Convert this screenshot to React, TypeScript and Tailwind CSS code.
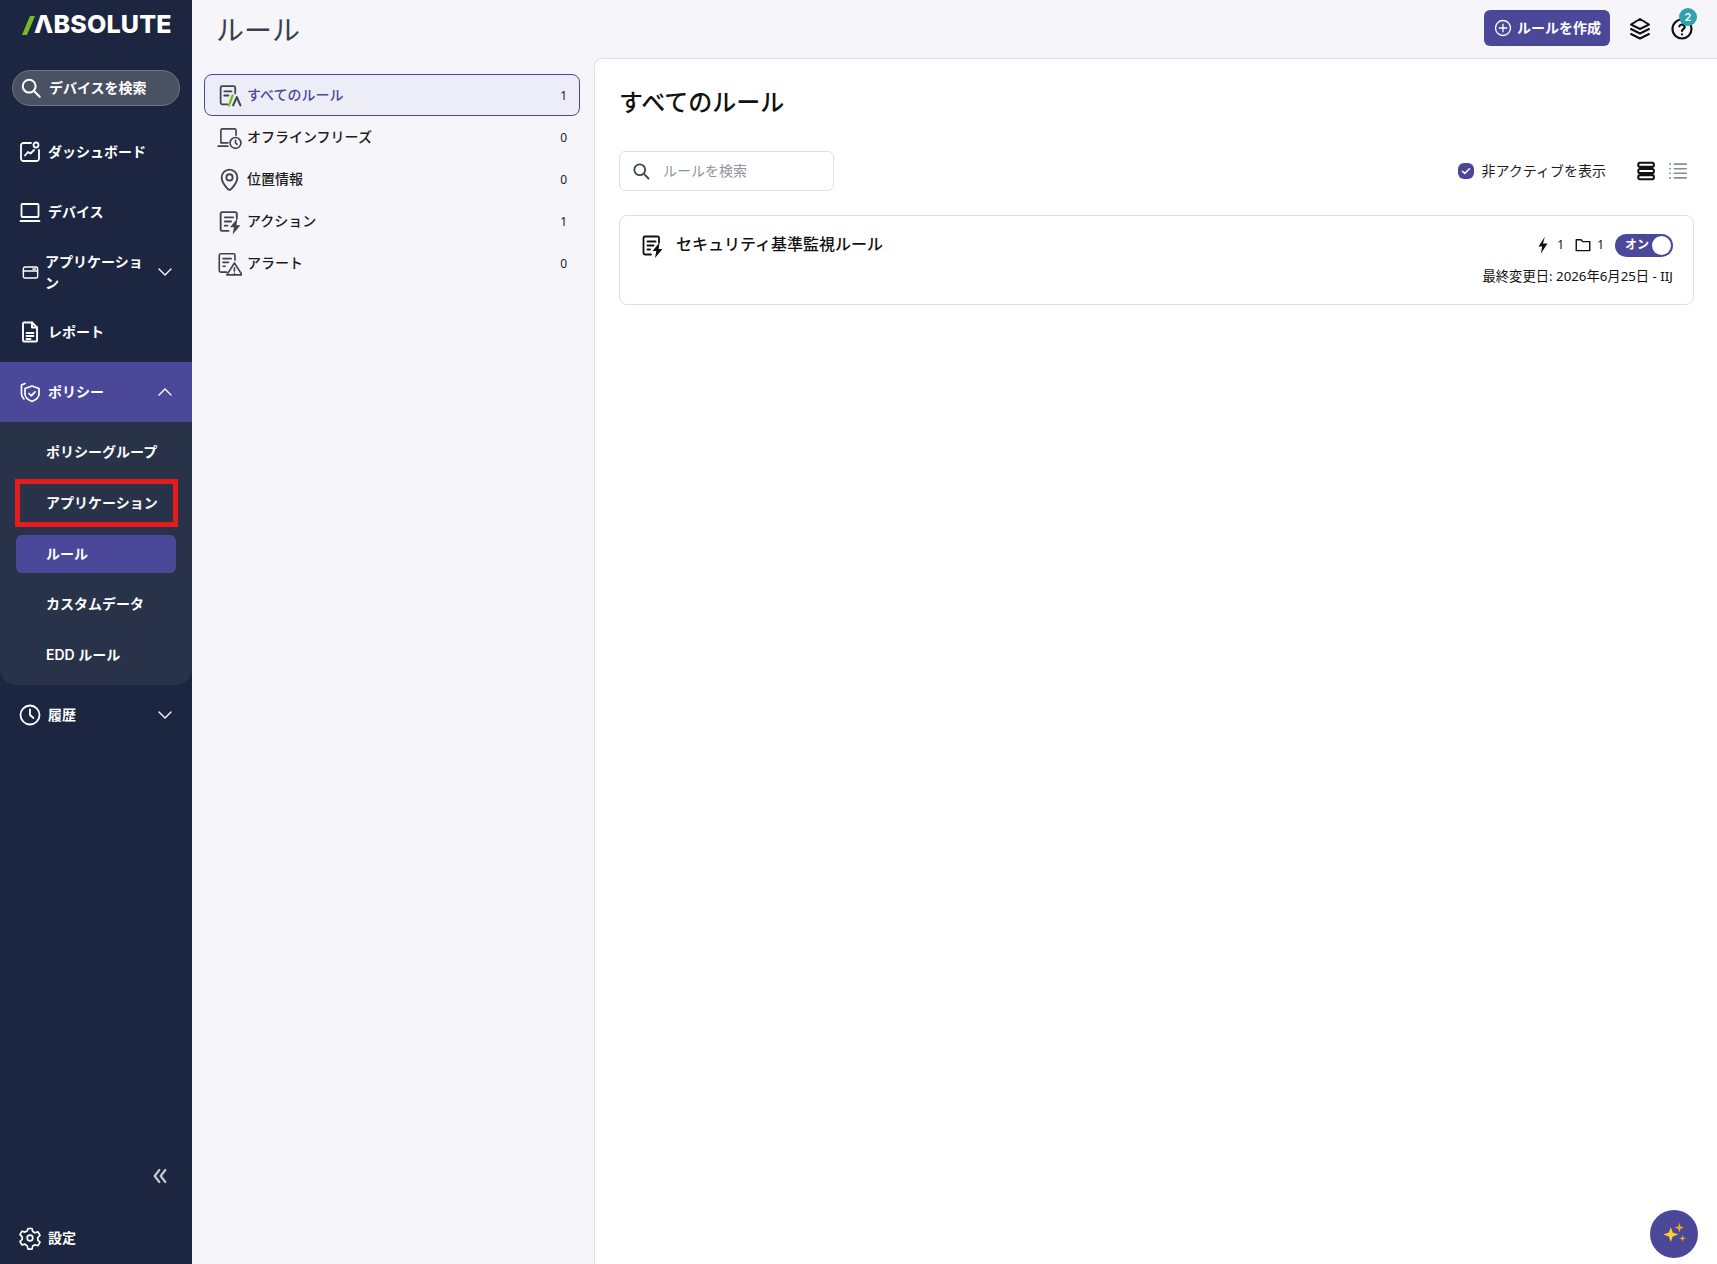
import React from "react";

const S = ({ size = 24, className = "", children, vb = "0 0 24 24", fill = "none", sw = 2 }: any) => (
  <svg width={size} height={size} viewBox={vb} fill={fill} stroke={fill === "none" ? "currentColor" : "none"} strokeWidth={sw} strokeLinecap="round" strokeLinejoin="round" className={className}>
    {children}
  </svg>
);

const Chevron = ({ up = false }: { up?: boolean }) => (
  <S size={18} sw={1.8}><path d={up ? "M4 16l8-8 8 8" : "M4 8l8 8 8-8"} /></S>
);

const NavItem = ({ icon, label, chevron, active, wrap }: any) => (
  <div className={`h-[60px] pl-[18px] pr-[18px] flex items-center text-white text-sm font-semibold ${active ? "bg-[#4c4899]" : ""}`}>
    <span className="w-6 h-6 shrink-0 flex items-center justify-center">{icon}</span>
    <span className={wrap ? "ml-[3px] -mt-px w-[100px] leading-[21px] [word-break:break-all]" : "ml-[6px]"}>{label}</span>
    {chevron && <span className="ml-auto">{<Chevron up={chevron === "up"} />}</span>}
  </div>
);

const SubItem = ({ label, active, marked }: any) => (
  <div className={`relative h-[38px] mt-[12.75px] first:mt-0 ml-4 w-[160px] pl-[30px] flex items-center rounded-md text-white text-sm font-semibold ${active ? "bg-[#4c4899]" : ""}`}>
    {label}
    {marked && <span className="absolute -top-[5px] -bottom-[5px] -left-px -right-[2px] border-[5px] border-[#e61c1c]" />}
  </div>
);

const DocBase = ({ children }: any) => (
  <>
    <path d="M11 21H5A1.500 1.500 0 0 1 3.500 19.500v-15A1.500 1.500 0 0 1 5 3h12.500A1.500 1.500 0 0 1 19 4.500V9" />
    <path d="M7.500 8h8M7.500 12h6M7.500 16h2.500" />
    {children}
  </>
);

const Bolt = () => <path d="M19.500 9l-7 8.500h3.800L15 24.500l7.500-9h-3.800l.8-6.500z" fill="currentColor" stroke="none" />;

const ListRow = ({ icon, label, count, active }: any) => (
  <div className={`h-[42px] pl-[11px] pr-[12px] flex items-center rounded-lg text-sm border ${active ? "bg-[#ecedf6] border-[#4c4899] text-[#4c4899]" : "border-transparent text-[#1c1c1c]"}`}>
    <span className="w-[26px] h-6 shrink-0 flex items-center justify-center text-[#3f4450]">{icon}</span>
    <span className="ml-[5px] font-medium">{label}</span>
    <span className="ml-auto pt-px text-xs text-[#1c1c1c] font-['Noto_Sans',sans-serif]">{count}</span>
  </div>
);

export default function App() {
  return (
    <div className="h-screen w-full overflow-hidden flex bg-[#f5f5fa] font-['Inter','Noto_Sans_CJK_JP',sans-serif]">
      <aside className="w-[192px] shrink-0 bg-[#1c2640] flex flex-col">
        <div className="h-[70px] pl-[22px] pt-[8px] flex items-start">
          <svg width="13" height="19" viewBox="0 0 13 19" className="mt-[8px] shrink-0"><path d="M8 0h5L5 19H0z" fill="#76bc21" /></svg>
          <span className="text-white text-[25px] leading-[32px] font-extrabold tracking-[0.2px] ml-[-1px]">ΛBSOLUTE</span>
        </div>
        <div className="h-9 mx-3 w-[168px] rounded-full bg-[#4a5163] border border-[#6d7485] flex items-center pl-[7px] text-white text-sm font-semibold">
          <S size={22} sw={2.200}><circle cx="10" cy="10" r="7" /><path d="M15.500 15.500L21.500 21.500" /></S>
          <span className="ml-[7px]">デバイスを検索</span>
        </div>
        <nav className="mt-4">
          <NavItem label="ダッシュボード" icon={<S sw={1.8}><path d="M13 3H5.500A2.500 2.500 0 0 0 3 5.500v13A2.500 2.500 0 0 0 5.500 21h13a2.500 2.500 0 0 0 2.500-2.500V10" /><circle cx="18" cy="5" r="2.500" /><path d="M7 15.500l3-3.500 2.500 1.500L16 10" /></S>} />
          <NavItem label="デバイス" icon={<S sw={1.8}><rect x="3.500" y="4" width="17" height="13" rx="1" /><path d="M2.500 21h19" /></S>} />
          <NavItem wrap chevron="down" label="アプリケーション" icon={<S size={19} sw={1.8}><rect x="3" y="5" width="18" height="14" rx="2" /><path d="M3 10h18M15 7.500h2M18 7.500h.5" /></S>} />
          <NavItem label="レポート" icon={<S sw={1.9}><path d="M14 2.500H6a1 1 0 0 0-1 1v17a1 1 0 0 0 1 1h12a1 1 0 0 0 1-1V7.500z" /><path d="M14 2.500v5h5M8.500 13h7M8.500 16h7M8.500 19h4" /></S>} />
          <NavItem active chevron="up" label="ポリシー" icon={<S sw={1.7}><path d="M7 3.500L3.500 5v9c0 2 1 3.500 2.500 5" /><path d="M14 6l7 2.500V14c0 3.500-3.500 6-7 7.500C10.500 20 7 17.500 7 14V8.500z" /><path d="M11 13.500l2.300 2.300 3.700-4" /></S>} />
        </nav>
        <div className="bg-[#283349] rounded-b-2xl pt-[11px] pb-[11px]">
          <SubItem label="ポリシーグループ" />
          <SubItem marked label="アプリケーション" />
          <SubItem active label="ルール" />
          <SubItem label="カスタムデータ" />
          <SubItem label="EDD ルール" />
        </div>
        <div>
          <NavItem chevron="down" label="履歴" icon={<S sw={1.8}><circle cx="12" cy="12" r="9.500" /><path d="M12 6.500V12l3.500 3" /></S>} />
        </div>
        <div className="mt-auto pr-[24px] flex justify-end text-[#c9ccd4] mb-[36px]">
          <S size={16} sw={3.200}><path d="M11 3l-7 9 7 9M20 3l-7 9 7 9" /></S>
        </div>
        <div className="h-[36px] mb-2 pl-[18px] flex items-center text-white text-sm font-semibold">
          <S sw={1.700}><circle cx="12" cy="12" r="2.800" /><path d="M10 2.500h4l.7 3 2.300 1.300 3-.9 2 3.500-2.200 2.100v2.600l2.200 2.100-2 3.500-3-.9-2.300 1.300-.7 3h-4l-.7-3L7 18.100l-3 .9-2-3.500 2.200-2.100v-2.600L2 8.700l2-3.500 3 .9 2.300-1.300z" /></S>
          <span className="ml-[6px]">設定</span>
        </div>
      </aside>

      <div className="flex-1 min-w-0 flex flex-col">
        <header className="h-[58px] shrink-0 flex items-center pl-[24px] pr-[20px]">
          <h1 className="text-[28px] font-normal text-[#3a3f4b] mt-[3px]">ルール</h1>
          <button className="ml-auto h-9 w-[126px] mt-[-3px] rounded-md bg-[#4c4899] text-white text-sm font-semibold flex items-center pl-[10px]">
            <S size={18} sw={1.700}><circle cx="12" cy="12" r="10" /><path d="M12 7v10M7 12h10" /></S>
            <span className="ml-[5px]">ルールを作成</span>
          </button>
          <span className="ml-[18px] w-6 mr-[1px] flex text-[#111]">
            <S size={26} sw={2}><path d="M12 2l9 5.500L12 12 3 7.500z" /><path d="M3 12l9 4.500 9-4.500" /><path d="M3 17l9 4.500 9-4.500" /></S>
          </span>
          <span className="relative ml-[17px] mr-[3px] w-6 flex text-[#111]">
            <S sw={2.200}><circle cx="12" cy="12" r="9.500" /><path d="M9.300 9.300a2.800 2.800 0 0 1 5.400.8c0 1.900-2.700 2.300-2.700 4" /><path d="M12 17.300v.1" /></S>
            <span className="absolute -top-[9px] left-[9px] w-[18px] h-[18px] rounded-full bg-[#2fa3ad] text-white text-[11px] font-semibold flex items-center justify-center">2</span>
          </span>
        </header>

        <div className="flex-1 min-h-0 flex">
          <section className="w-[402px] shrink-0 pt-4 pl-3 pr-[14px]">
            <ListRow active label="すべてのルール" count="1" icon={
              <S size={25} sw={1.700}>
                <path d="M10 20.500H5A1.500 1.500 0 0 1 3.500 19V4.500A1.500 1.500 0 0 1 5 3h11A1.500 1.500 0 0 1 17.500 4.500V10" />
                <path d="M7 8h7M7 12h4" />
                <path d="M15 12l-3.500 9.500" stroke="#76bc21" strokeWidth="2.200" />
                <path d="M15.500 21.500l3.500-8 3.500 8" stroke="#3f4450" strokeWidth="2" />
              </S>} />
            <ListRow label="オフラインフリーズ" count="0" icon={
              <S size={27} sw={1.500}><path d="M11 17H4.500V5.500A1.500 1.500 0 0 1 6 4h11a1.500 1.500 0 0 1 1.500 1.500V10" /><path d="M2 20h9" /><circle cx="18" cy="17" r="5" /><path d="M18 14.500V17l1.500 1.300" /></S>} />
            <ListRow label="位置情報" count="0" icon={
              <S size={25} sw={1.800}><path d="M12 22c-1 0-7.500-6.500-7.500-12a7.500 7.500 0 0 1 15 0c0 5.500-6.500 12-7.500 12z" /><circle cx="12" cy="10" r="3" /></S>} />
            <ListRow label="アクション" count="1" icon={<S size={25} sw={1.800}><DocBase /><Bolt /></S>} />
            <ListRow label="アラート" count="0" icon={
              <S size={27} sw={1.500}><path d="M10 20H4.500A1.500 1.500 0 0 1 3 18.500v-14A1.500 1.500 0 0 1 4.500 3H16a1.500 1.500 0 0 1 1.500 1.500V9" /><path d="M6.500 7.500h7.500M6.500 11h5M6.500 14.500h2" /><path d="M17 11.500l7 11H10z" /><path d="M17 16v3M17 21v.1" /></S>} />
          </section>

          <main className="flex-1 min-w-0 bg-white border-l border-t border-[#dedfe8] rounded-tl-lg pl-[24px] pr-[23px] relative">
            <h2 className="mt-[24px] text-2xl leading-[36px] font-medium text-[#111] font-['Noto_Sans_CJK_JP',sans-serif]">すべてのルール</h2>
            <div className="mt-[32px] flex items-center">
              <div className="w-[215px] h-10 rounded-md border border-[#dfe0e4] flex items-center pl-[11px] text-sm text-[#8f939b]">
                <S size={20} sw={2.200} className="text-[#3f4450]"><circle cx="10.500" cy="10.500" r="6.500" /><path d="M15.500 15.500L21 21" /></S>
                <span className="ml-[12px]">ルールを検索</span>
              </div>
              <div className="ml-auto flex items-center mr-[5px]">
                <span className="w-4 h-4 rounded-[6px] bg-[#4c4899] text-white flex items-center justify-center">
                  <S size={12} sw={3}><path d="M5 12.500l4.500 4.500L19 7.500" /></S>
                </span>
                <span className="ml-2 text-sm text-[#1c1c1c]">非アクティブを表示</span>
                <span className="ml-[30px] text-[#111] flex">
                  <S size={22} sw={2.200}><rect x="2.500" y="3" width="17" height="4.500" rx="1.800" /><rect x="2.500" y="9.800" width="17" height="4.500" rx="1.800" /><rect x="2.500" y="16.500" width="17" height="4.500" rx="1.800" /></S>
                </span>
                <span className="ml-[9px] text-[#8a8e96] flex">
                  <S size={22} sw={1.800}><path d="M8 4.500h13M8 9.500h13M8 14.500h13M8 19.500h13M3 4.500h.5M3 9.500h.5M3 14.500h.5M3 19.500h.5" /></S>
                </span>
              </div>
            </div>
            <div className="mt-[24px] h-[90px] rounded-lg border border-[#dfe0e4] pl-5 pr-5 pt-[15px] flex">
              <span className="w-6 h-6 text-[#111] flex mt-[2px] shrink-0"><S size={25} sw={1.800}><DocBase /><Bolt /></S></span>
              <span className="ml-[12px] mt-px text-base leading-6 font-medium text-[#111]">セキュリティ基準監視ルール</span>
              <div className="ml-auto flex flex-col items-end font-['Noto_Sans','Noto_Sans_CJK_JP',sans-serif]">
                <div className="flex items-center text-xs text-[#111] h-6 mt-[2px]">
                  <S size={18} fill="currentColor"><path d="M14.500 1L6 14h5l-2 9.500L18 10h-6z" /></S>
                  <span className="ml-[5px]">1</span>
                  <S size={18} sw={1.900} className="ml-[10px]"><path d="M3 19.500V5h6.500l2 2.500H21v12z" /></S>
                  <span className="ml-[5px]">1</span>
                  <span className="ml-[11px] w-[58px] h-[23px] rounded-full bg-[#4c4899] flex items-center pl-[10px] pr-[1px] text-white text-xs font-bold">
                    オン
                    <span className="ml-auto w-[19px] h-[19px] rounded-full bg-white mr-[1px]" />
                  </span>
                </div>
                <div className="mt-[10px] text-[13.3px] leading-[18px] text-[#111] [font-variant-ligatures:none]">最終変更日: 2026年6月25日 - IIJ</div>
              </div>
            </div>
            <button className="absolute right-[19px] bottom-[6px] w-12 h-12 rounded-full bg-[#4c4899] flex items-center justify-center">
              <svg width="30" height="30" viewBox="0 0 28 28">
                <path d="M11 7.500l1.800 5.200L18 14.500l-5.200 1.800L11 21.500l-1.800-5.200L4 14.500l5.200-1.800z" fill="#fbd02d" />
                <path d="M19 3.500l1.100 3.400L23.500 8l-3.400 1.100L19 12.500l-1.100-3.400L14.500 8l3.400-1.100z" fill="#f5a623" />
                <path d="M22 15l.8 2.200 2.200.8-2.200.8-.8 2.200-.8-2.200-2.200-.8 2.200-.8z" fill="#f5a623" />
              </svg>
            </button>
          </main>
        </div>
      </div>
    </div>
  );
}
